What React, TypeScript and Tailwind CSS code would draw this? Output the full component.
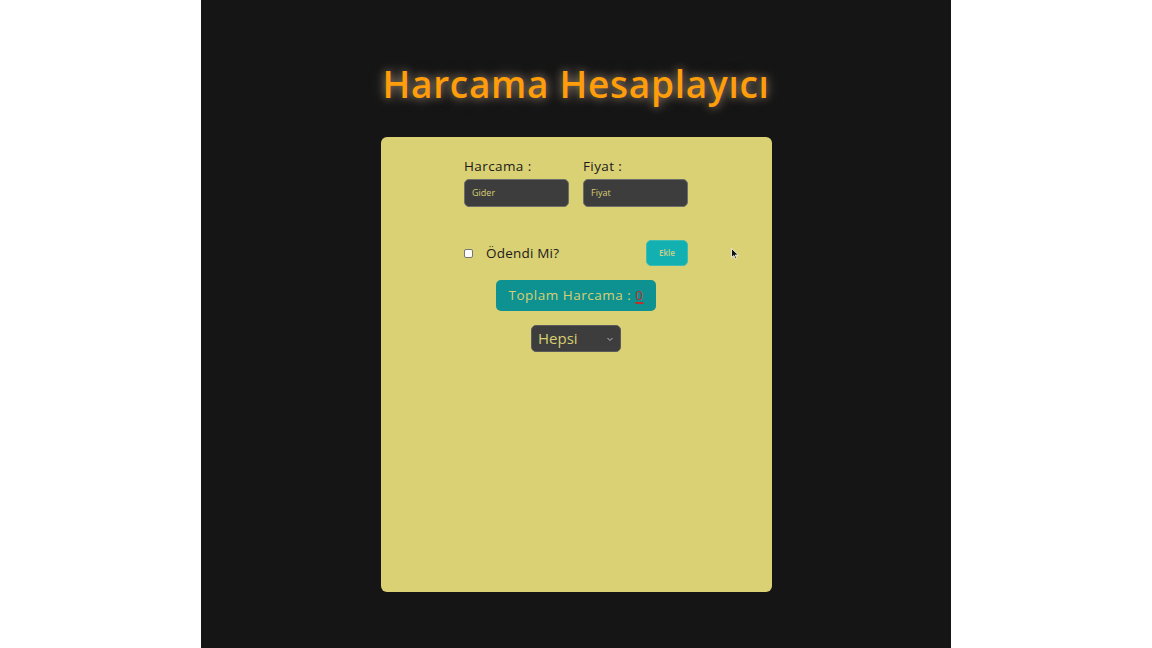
import React from "react";

export default function App() {
  const font = { fontFamily: '"Open Sans", "Noto Sans", sans-serif' };
  return (
    <div className="w-[1152px] h-[648px] bg-white flex justify-center overflow-hidden" style={font}>
      <div className="w-[750px] h-full bg-[#151515] flex flex-col items-center relative">
        <h1
          className="mt-[60px] text-[37px] leading-[48px] font-semibold tracking-[0.7px] text-[#ff9d0a]"
          style={{ textShadow: "0 0 8px rgba(255,210,150,0.5), 0 0 16px rgba(210,210,210,0.35)" }}
        >
          Harcama Hesaplayıcı
        </h1>
        <div className="mt-[29px] w-[391px] h-[455px] bg-[#dad074] rounded-[6px] flex flex-col items-center pt-[20px]">
          <div className="w-[224px] flex gap-[14px]">
            <div className="flex flex-col w-[105px]">
              <label className="text-[13.5px] leading-[18px] tracking-[0.4px] text-[#1b1b1b]">Harcama :</label>
              <div className="mt-[4px] h-[28px] rounded-[5px] bg-[#3d3d3d] border border-[#6d6d6d] flex items-center px-[7px] text-[9px] text-[#d9cf72]">
                Gider
              </div>
            </div>
            <div className="flex flex-col w-[105px]">
              <label className="text-[13.5px] leading-[18px] tracking-[0.4px] text-[#1b1b1b]">Fiyat :</label>
              <div className="mt-[4px] h-[28px] rounded-[5px] bg-[#3d3d3d] border border-[#6d6d6d] flex items-center px-[7px] text-[9px] text-[#d9cf72]">
                Fiyat
              </div>
            </div>
          </div>
          <div className="w-[224px] mt-[33px] flex items-center h-[26px]">
            <div className="mt-[1px] w-[9px] h-[9px] bg-white border border-[#767676] rounded-[2px]" />
            <span className="ml-[13px] text-[13.5px] tracking-[0.2px] text-[#1b1b1b]">Ödendi Mi?</span>
            <div className="ml-auto w-[42px] h-[26px] rounded-[5px] bg-[#12b0b0] border border-[#3cbcb4] flex items-center justify-center text-[8px] font-semibold text-[#cfd08a]">
              Ekle
            </div>
          </div>
          <div className="mt-[14px] h-[31px] px-[13px] rounded-[5px] bg-[#0e9191] flex items-center text-[13.5px] tracking-[0.5px] text-[#d9cf72]">
            Toplam Harcama :&nbsp;<span className="underline decoration-[#c0302a] decoration-[1.5px] underline-offset-2 text-[#c0302a]">0</span>
          </div>
          <div className="mt-[14px] w-[90px] h-[27px] rounded-[5px] bg-[#3d3d3d] border border-[#5a5a5a] flex items-center justify-between px-[6px] text-[15px] font-medium text-[#d9cf72]">
            <span>Hepsi</span>
            <svg width="8" height="8" viewBox="0 0 8 8"><path d="M1.5 3l2.5 2.5L6.5 3" fill="none" stroke="#bbb" strokeWidth="1" /></svg>
          </div>
        </div>
        <svg className="absolute left-[530px] top-[248px]" width="8" height="12" viewBox="0 0 8 12">
          <path d="M0.5 0.5L0.5 9.5L2.8 7.5L4.5 11L5.8 10.4L4.2 7H7.3Z" fill="#111" stroke="#fff" strokeWidth="0.8" />
        </svg>
      </div>
    </div>
  );
}
